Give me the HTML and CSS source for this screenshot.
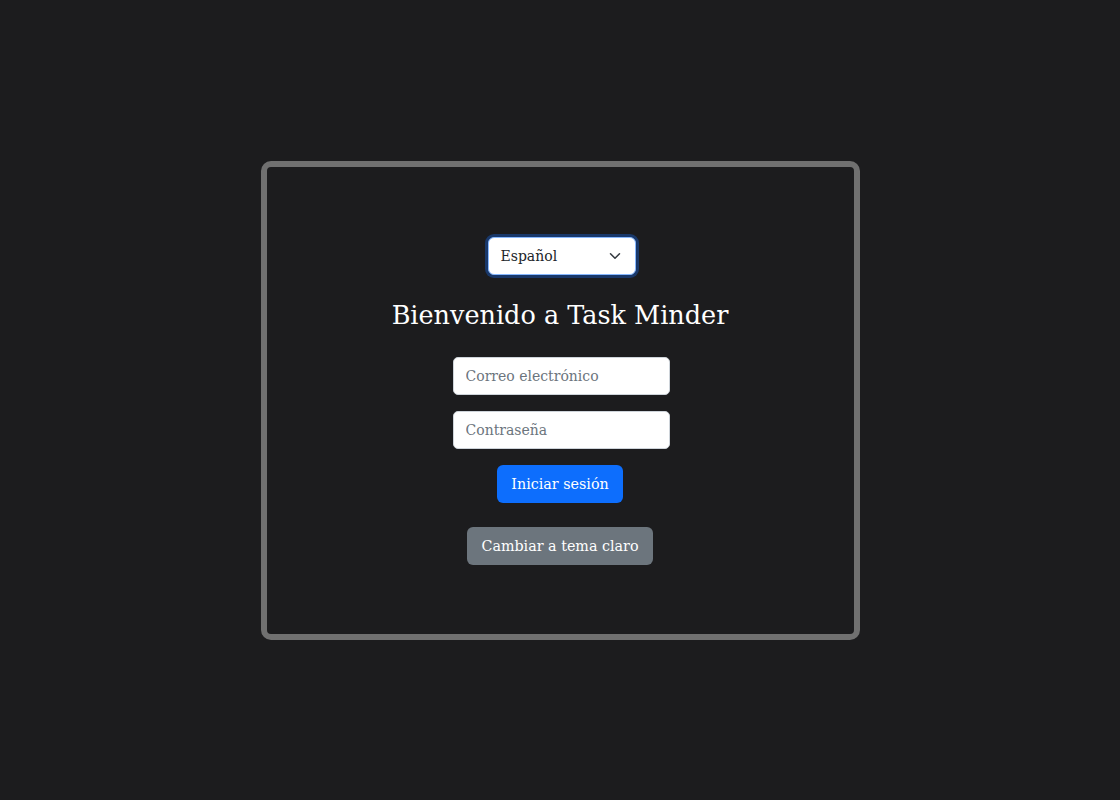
FILE: index.html
```html
<!DOCTYPE html>
<html lang="es">
<head>
<meta charset="utf-8">
<title>Task Minder</title>
<link rel="stylesheet" href="styles.css">
</head>
<body>
<main class="page">
  <section class="card">
    <div class="select-wrap">
      <div class="select">
        <span>Español</span>
        <svg class="chev" width="12" height="12" viewBox="0 0 16 16"><path d="M2 5l6 6 6-6" fill="none" stroke="#343a40" stroke-width="2" stroke-linecap="round" stroke-linejoin="round"/></svg>
      </div>
    </div>
    <h1 class="title">Bienvenido a Task Minder</h1>
    <form class="form">
      <input class="field" type="email" placeholder="Correo electrónico">
      <input class="field" type="password" placeholder="Contraseña">
      <button class="btn btn-primary" type="button">Iniciar sesión</button>
    </form>
    <button class="btn btn-secondary" type="button">Cambiar a tema claro</button>
  </section>
</main>
</body>
</html>
```
FILE: styles.css
```css
* { box-sizing: border-box; }
html, body { margin: 0; height: 100%; }
body {
  background: #1c1c1e;
  font-family: "DejaVu Serif", serif;
  color: #fff;
}
.page {
  height: 800px;
  display: flex;
  align-items: center;
  justify-content: center;
}
.card {
  width: 599px;
  height: 479px;
  border: 6px solid #707070;
  border-radius: 10px;
  display: flex;
  flex-direction: column;
  align-items: center;
  justify-content: flex-start;
  padding-top: 67px;
}
.select-wrap {
  padding: 3px;
  border-radius: 9px;
  background: #19386a;
  margin-left: 3px;
}
.select {
  width: 148px;
  height: 38px;
  background: #fff;
  border: 1px solid #86b7fe;
  border-radius: 6px;
  display: flex;
  align-items: center;
  justify-content: space-between;
  padding: 0 14px 0 12px;
  color: #212529;
  font-size: 14px;
}
.chev { width: 12px; height: 12px; }
.title {
  font-weight: normal;
  font-size: 25.5px;
  margin: 22px 0 27px;
  line-height: 30px;
}
.form {
  display: flex;
  flex-direction: column;
  align-items: center;
  gap: 16px;
}
.field {
  width: 217px;
  height: 38px;
  border: 1px solid #ced4da;
  border-radius: 5px;
  padding: 0 12px;
  font-family: inherit;
  font-size: 14px;
  background: #fff;
  margin-left: 2px;
}
.field::placeholder { color: #6c757d; }
.btn {
  font-family: inherit;
  font-size: 14.3px;
  color: #fff;
  border: none;
  border-radius: 6px;
  height: 38px;
  padding: 0 14px;
}
.btn-primary { background: #0d6efd; }
.btn-secondary { background: #6c757d; margin-top: 24px; }
```
